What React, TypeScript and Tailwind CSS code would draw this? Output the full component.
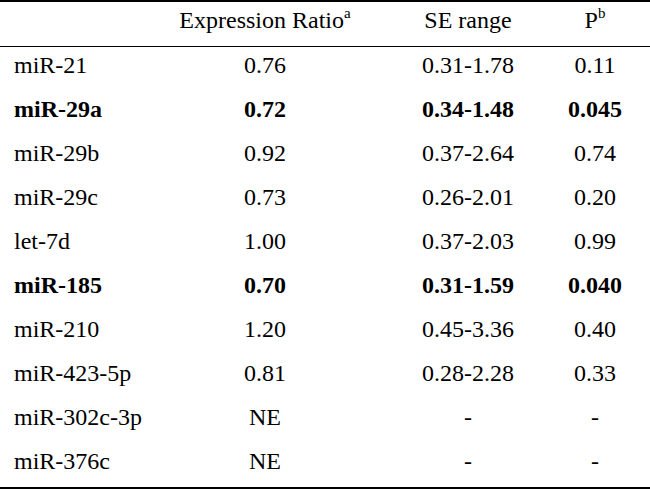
const rows = [
  { name: "miR-21", ratio: "0.76", se: "0.31-1.78", p: "0.11" },
  { name: "miR-29a", ratio: "0.72", se: "0.34-1.48", p: "0.045", bold: true },
  { name: "miR-29b", ratio: "0.92", se: "0.37-2.64", p: "0.74" },
  { name: "miR-29c", ratio: "0.73", se: "0.26-2.01", p: "0.20" },
  { name: "let-7d", ratio: "1.00", se: "0.37-2.03", p: "0.99" },
  { name: "miR-185", ratio: "0.70", se: "0.31-1.59", p: "0.040", bold: true },
  { name: "miR-210", ratio: "1.20", se: "0.45-3.36", p: "0.40" },
  { name: "miR-423-5p", ratio: "0.81", se: "0.28-2.28", p: "0.33" },
  { name: "miR-302c-3p", ratio: "NE", se: "-", p: "-" },
  { name: "miR-376c", ratio: "NE", se: "-", p: "-" },
];

const cols = "grid grid-cols-[160px_210px_196px_58px]";

const App = () => {
  return (
    <div className="w-[650px] h-[490px] bg-white text-black font-['Liberation_Serif','Times_New_Roman',serif] text-[24px] leading-none">
      <div className="border-t-2 border-b-2 border-black">
        <div className={`${cols} h-[45px] items-center border-b border-black pb-[8px]`}>
          <div />
          <div className="text-center">
            Expression Ratio<sup className="text-[15px] relative -top-[10px]">a</sup>
          </div>
          <div className="text-center">SE range</div>
          <div className="text-center">
            P<sup className="text-[15px] relative -top-[10px]">b</sup>
          </div>
        </div>
        {rows.map((r) => (
          <div
            key={r.name}
            className={`${cols} h-[44px] items-center pb-[8px] ${r.bold ? "font-bold" : ""}`}
          >
            <div className="pl-[14px]">{r.name}</div>
            <div className="text-center">{r.ratio}</div>
            <div className="text-center">{r.se}</div>
            <div className="text-center">{r.p}</div>
          </div>
        ))}
      </div>
    </div>
  );
};

export default App;
